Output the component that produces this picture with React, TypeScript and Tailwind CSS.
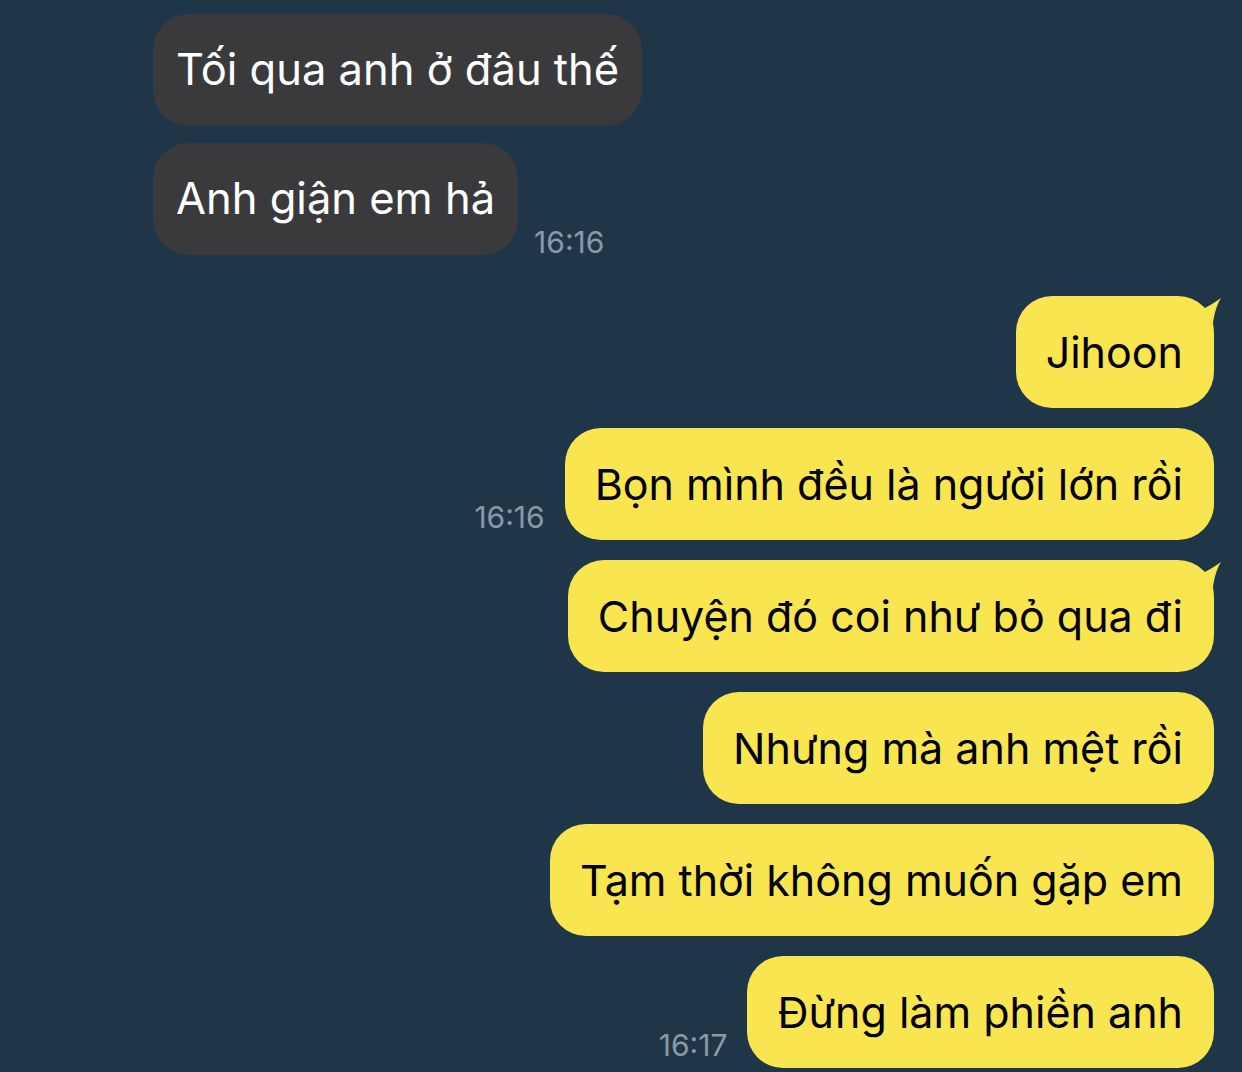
const FONT = "font-['Inter','Noto_Sans',sans-serif]";

const Tail = () => (
  <svg
    className="absolute -right-[10px] -top-[2px]"
    width="36"
    height="48"
    viewBox="0 0 36 48"
  >
    <path d="M0 20 C9 18 19 14 33 4 C27 14 24 26 24 48 L0 48 Z" fill="#f9e54f" />
  </svg>
);

const Time = ({ t, className = "" }: { t: string; className?: string }) => (
  <span className={`text-[30px] leading-none text-[#8a99a7] ${className}`}>{t}</span>
);

const Gray = ({ text }: { text: string }) => (
  <div className="h-[112px] rounded-[36px] bg-[#3a3a3c] px-[23px] flex items-center text-[43.5px] text-white">
    {text}
  </div>
);

const Yellow = ({ text, tail = false }: { text: string; tail?: boolean }) => (
  <div className="relative h-[112px] rounded-[36px] bg-[#f9e54f] pl-[30px] pr-[31px] flex items-center text-[43px] text-black">
    {tail && <Tail />}
    <span className="relative">{text}</span>
  </div>
);

export default function App() {
  return (
    <div className={`min-h-[1072px] w-[1242px] bg-[#1f3649] overflow-hidden ${FONT}`}>
      <div className="pl-[153px] pt-[14px] flex flex-col items-start gap-[17px]">
        <Gray text="Tối qua anh ở đâu thế" />
        <div className="flex items-end gap-[16px]">
          <Gray text="Anh giận em hả" />
          <Time t="16:16" className="mb-[-2px]" />
        </div>
      </div>

      <div className="pr-[28px] pt-[41px] flex flex-col items-end gap-[20px]">
        <Yellow text="Jihoon" tail />
        <div className="flex items-end gap-[20px]">
          <Time t="16:16" className="mb-[8px]" />
          <Yellow text="Bọn mình đều là người lớn rồi" />
        </div>
        <Yellow text="Chuyện đó coi như bỏ qua đi" tail />
        <Yellow text="Nhưng mà anh mệt rồi" />
        <Yellow text="Tạm thời không muốn gặp em" />
        <div className="flex items-end gap-[20px]">
          <Time t="16:17" className="mb-[8px]" />
          <Yellow text="Đừng làm phiền anh" />
        </div>
      </div>
    </div>
  );
}
